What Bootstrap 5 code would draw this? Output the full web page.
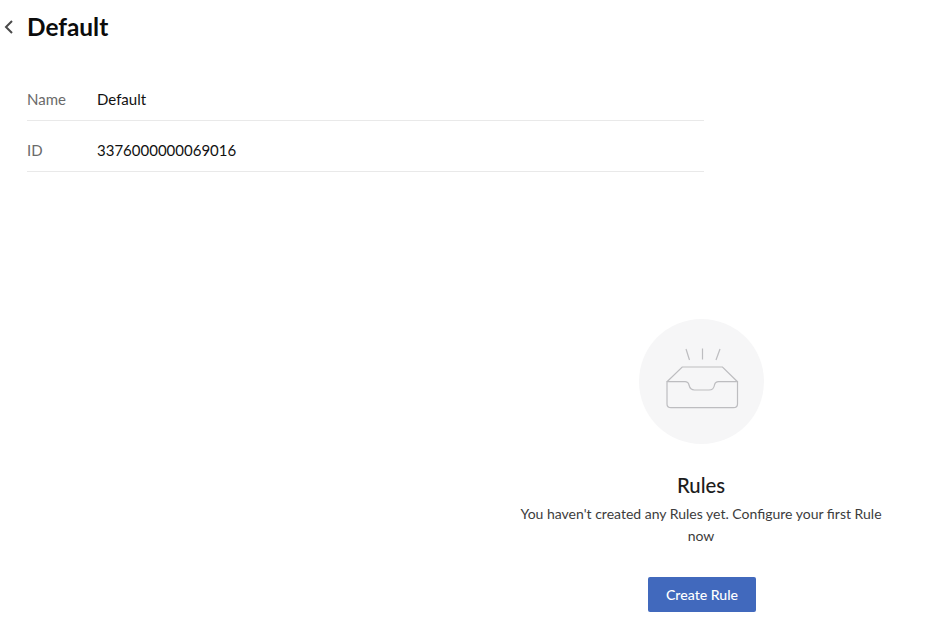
<!DOCTYPE html>
<html lang="en">
<head>
    <meta charset="UTF-8">
    <meta name="viewport" content="width=device-width, initial-scale=1">
    <title>Default</title>
    <link href="https://cdn.jsdelivr.net/npm/bootstrap@5.3.3/dist/css/bootstrap.min.css" rel="stylesheet">
    <script src="https://cdn.jsdelivr.net/npm/bootstrap@5.3.3/dist/js/bootstrap.bundle.min.js"></script>
    <style>
        body {
            font-family: "Lato", "Liberation Sans", sans-serif;
            background: #fff;
            color: #111;
            overflow: hidden;
        }

        .page-head {
            height: 53px;
            padding-left: 4px;
        }

        .back-link {
            width: 23px;
            line-height: 0;
        }

        .page-title {
            font-size: 24.4px;
            font-weight: 700;
            color: #0c0c0c;
            margin: 0;
        }

        .detail-list {
            width: 677px;
            margin: 17px 0 0 27px;
        }

        .detail-row {
            height: 51px;
            padding-top: 9px;
            border-bottom: 1px solid #e9e9e9;
            font-size: 15px;
        }

        .detail-label {
            width: 70px;
            color: #6a6a6a;
        }

        .empty-box {
            width: 400px;
            margin: 147px 0 0 501px;
        }

        .empty-circle {
            width: 125px;
            height: 125px;
            border-radius: 50%;
            background: #f6f6f7;
        }

        .empty-title {
            font-size: 20.3px;
            font-weight: 500;
            color: #1d1d1d;
            margin: 28px 0 0;
            line-height: 26px;
        }

        .empty-text {
            width: 375px;
            font-size: 14px;
            line-height: 22px;
            color: #3c3c3c;
            margin: 5px 0 0;
        }

        .btn-create {
            width: 108px;
            height: 35px;
            margin: 30px 0 0 2px;
            padding: 0;
            font-size: 14.1px;
            font-weight: 500;
            color: #fff;
            background: #4169bd;
            border: 0;
            border-radius: 2px;
        }
    </style>
</head>
<body>
    <div class="page-head d-flex align-items-center">
        <a class="back-link" href="#" aria-label="Back">
            <svg width="9" height="14" viewBox="0 0 9 14" fill="none" stroke="#4a4a4a" stroke-width="2"><path d="M8 1 L2 7 L8 13"/></svg>
        </a>
        <h1 class="page-title">Default</h1>
    </div>

    <div class="detail-list">
        <div class="detail-row d-flex align-items-center">
            <div class="detail-label">Name</div>
            <div>Default</div>
        </div>
        <div class="detail-row d-flex align-items-center">
            <div class="detail-label">ID</div>
            <div>3376000000069016</div>
        </div>
    </div>

    <div class="empty-box d-flex flex-column align-items-center text-center">
        <div class="empty-circle d-flex align-items-center justify-content-center">
            <svg width="125" height="125" viewBox="0 0 125 125" fill="none" stroke="#bdbdc0" stroke-width="1.2">
                <path d="M47 30 L50.500 41"/>
                <path d="M63.500 29.500 V40.500"/>
                <path d="M81 30 L77 41"/>
                <path d="M28 62.700 L43.200 48 H83.500 L98.500 62.700"/>
                <path d="M28 62.700 H46 C48.500 62.700 49.500 64 50 66 C50.700 69 52.500 71 55.500 71 H70 C73 71 75 69 75.500 66 C76 64 77 62.700 79.500 62.700 H98.500 V85 C98.500 87.500 96.500 88.700 94.500 88.700 H32 C30 88.700 28 87.500 28 85 Z"/>
            </svg>
        </div>
        <div class="empty-title">Rules</div>
        <p class="empty-text">You haven't created any Rules yet. Configure your first Rule now</p>
        <button type="button" class="btn btn-create">Create Rule</button>
    </div>
</body>
</html>
